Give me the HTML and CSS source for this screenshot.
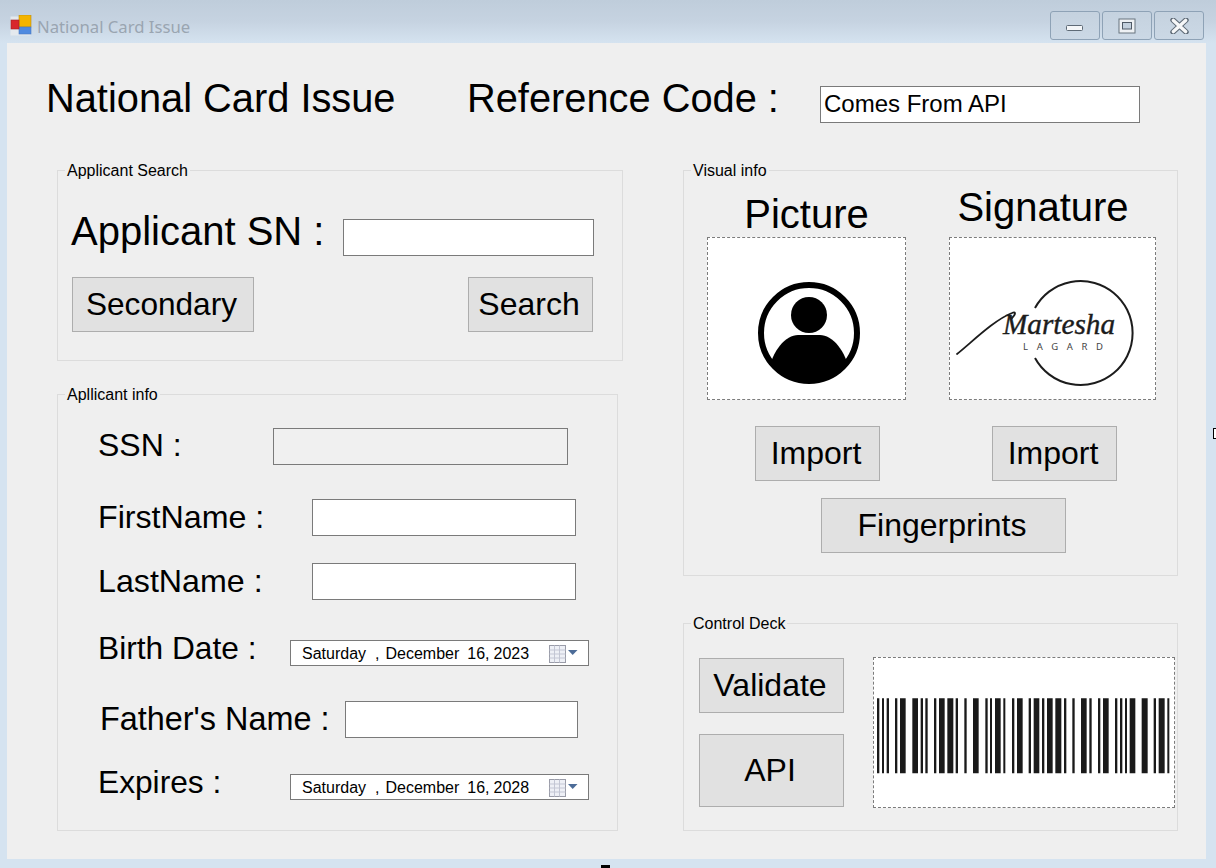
FILE: index.html
```html
<!DOCTYPE html>
<html lang="en">
<head>
<meta charset="utf-8">
<title>National Card Issue</title>
<link rel="stylesheet" href="styles.css">
</head>
<body>
<div class="window">
  <div class="titlebar">
    <svg class="app-icon" width="22" height="21" viewBox="0 0 22 21">
      <rect x="0.5" y="1.5" width="20" height="19" fill="#e4e9ee"/>
      <rect x="9" y="0" width="12" height="12" fill="#f4b400" stroke="#b98a10" stroke-width="0.6"/>
      <rect x="9" y="12" width="12" height="7" fill="#4f8ae0" stroke="#4a78c0" stroke-width="0.6"/>
      <rect x="1" y="5" width="8" height="9" fill="#d8282c" stroke="#a02024" stroke-width="0.6"/>
    </svg>
    <span class="window-title">National Card Issue</span>
    <div class="window-controls">
      <div class="win-btn">
        <svg width="19" height="8" viewBox="0 0 19 8"><rect x="1.5" y="1.5" width="16" height="5" rx="1" fill="#f4f6f8" stroke="#5e6a76"/></svg>
      </div>
      <div class="win-btn">
        <svg width="18" height="16" viewBox="0 0 18 16"><rect x="1" y="1" width="16" height="14" fill="#eef1f4" stroke="#69747f"/><rect x="4.5" y="4.5" width="9" height="6.5" fill="#c3d0dd" stroke="#4f5a66"/></svg>
      </div>
      <div class="win-btn">
        <svg width="19" height="16" viewBox="0 0 19 16"><path d="M3 2 L16 14 M16 2 L3 14" fill="none" stroke="#5e6a76" stroke-width="5.4" stroke-linecap="round"/><path d="M3.4 2.4 L15.6 13.6 M15.6 2.4 L3.4 13.6" fill="none" stroke="#f6f7f8" stroke-width="3.4" stroke-linecap="round"/></svg>
      </div>
    </div>
  </div>

  <div class="client">
    <header class="form-header">
      <h1 class="heading-xl form-title">National Card Issue</h1>
      <h2 class="heading-xl ref-label">Reference Code :</h2>
      <input class="textbox ref-input" type="text" value="Comes From API" aria-label="Reference Code">
    </header>

    <main class="columns">
      <div class="col">
        <fieldset class="group group-search">
          <legend>Applicant Search</legend>
          <div class="group-body body-search">
            <div class="sn-row">
              <label class="heading-xl sn-label">Applicant SN :</label>
              <input class="textbox sn-input" type="text" aria-label="Applicant SN">
            </div>
            <div class="search-actions">
              <button class="btn btn-secondary" type="button">Secondary</button>
              <button class="btn btn-search" type="button">Search</button>
            </div>
          </div>
        </fieldset>

        <fieldset class="group group-info">
          <legend>Apllicant info</legend>
          <div class="group-body body-info">
            <div class="row">
              <label class="field-label label-ssn">SSN :</label>
              <input class="textbox input-ssn" type="text" disabled aria-label="SSN">
            </div>
            <div class="row row-first">
              <label class="field-label label-name">FirstName :</label>
              <input class="textbox input-name" type="text" aria-label="FirstName">
            </div>
            <div class="row row-last">
              <label class="field-label label-name">LastName :</label>
              <input class="textbox input-name" type="text" aria-label="LastName">
            </div>
            <div class="row row-birth">
              <label class="field-label label-date">Birth Date :</label>
              <div class="datepicker">
                <span class="dp-dow">Saturday</span><span>,</span><span>December</span><span class="dp-day">16,</span><span class="dp-year">2023</span>
                <svg class="dp-cal" width="29" height="18" viewBox="0 0 29 18"><rect x="0.5" y="0.5" width="16" height="17" fill="#eef0f6" stroke="#9a9ca8"/><path d="M0.5 5H16.5M0.5 9H16.5M0.5 13H16.5M5.5 .5V17.5M10.5 .5V17.5" stroke="#c3c6d4" fill="none"/><path d="M19 5H28.5L23.7 10Z" fill="#4c6c98"/></svg>
              </div>
            </div>
            <div class="row row-father">
              <label class="field-label label-father">Father's Name :</label>
              <input class="textbox input-father" type="text" aria-label="Father's Name">
            </div>
            <div class="row row-expires">
              <label class="field-label label-date">Expires :</label>
              <div class="datepicker">
                <span class="dp-dow">Saturday</span><span>,</span><span>December</span><span class="dp-day">16,</span><span class="dp-year">2028</span>
                <svg class="dp-cal" width="29" height="18" viewBox="0 0 29 18"><rect x="0.5" y="0.5" width="16" height="17" fill="#eef0f6" stroke="#9a9ca8"/><path d="M0.5 5H16.5M0.5 9H16.5M0.5 13H16.5M5.5 .5V17.5M10.5 .5V17.5" stroke="#c3c6d4" fill="none"/><path d="M19 5H28.5L23.7 10Z" fill="#4c6c98"/></svg>
              </div>
            </div>
          </div>
        </fieldset>
      </div>

      <div class="col">
        <fieldset class="group group-visual">
          <legend>Visual info</legend>
          <div class="group-body body-visual">
            <div class="visual-grid">
              <div class="visual-col visual-picture">
                <h3 class="heading-lg">Picture</h3>
                <div class="picture-box picture-photo">
                  <svg width="197" height="161" viewBox="0 0 197 161">
                    <defs><clipPath id="ring"><circle cx="101" cy="95" r="48"/></clipPath></defs>
                    <circle cx="101" cy="95" r="48" fill="#fff" stroke="#000" stroke-width="6"/>
                    <circle cx="101" cy="77" r="18"/>
                    <path clip-path="url(#ring)" d="M60 136C64 112 78 97 90 97H112C124 97 138 112 142 136V150H60Z"/>
                  </svg>
                </div>
                <button class="btn btn-import btn-import-photo" type="button">Import</button>
              </div>
              <div class="visual-col visual-signature">
                <h3 class="heading-lg">Signature</h3>
                <div class="picture-box picture-sign">
                  <svg width="205" height="161" viewBox="0 0 205 161">
                    <path d="M85 70A52 52 0 1 1 85 120" fill="none" stroke="#1c1c1c" stroke-width="2"/>
                    <path d="M7 116C22 104 44 82 62 75C66 73 66 76 62 80" fill="none" stroke="#1c1c1c" stroke-width="1.8" stroke-linecap="round"/>
                    <text class="sign-name" x="53" y="96" textLength="112" lengthAdjust="spacingAndGlyphs">Martesha</text>
                    <text class="sign-sub" x="73" y="112" textLength="80">LAGARD</text>
                  </svg>
                </div>
                <button class="btn btn-import btn-import-sign" type="button">Import</button>
              </div>
            </div>
            <button class="btn btn-fingerprints" type="button">Fingerprints</button>
          </div>
        </fieldset>

        <fieldset class="group group-control">
          <legend>Control Deck</legend>
          <div class="group-body body-control">
            <div class="deck">
              <div class="deck-buttons">
                <button class="btn btn-validate" type="button">Validate</button>
                <button class="btn btn-api" type="button">API</button>
              </div>
              <div class="picture-box barcode-box">
                <svg width="300" height="149" viewBox="27 24 900 447">
                  <path fill="#1a1a1a" d="M36 145h7v225h-7zM51 145h6v225h-6zM65 145h7v225h-7zM90 145h7v225h-7zM105 145h17v225h-17zM142 145h17v225h-17zM167 145h7v225h-7zM181 145h7v225h-7zM207 145h7v225h-7zM222 145h17v225h-17zM247 145h18v225h-18zM272 145h7v225h-7zM298 145h7v225h-7zM324 145h17v225h-17zM361 145h7v225h-7zM375 145h6v225h-6zM390 145h17v225h-17zM415 145h6v225h-6zM441 145h7v225h-7zM456 145h17v225h-17zM491 145h7v225h-7zM506 145h17v225h-17zM531 145h7v225h-7zM546 145h17v225h-17zM571 145h18v225h-18zM597 145h7v225h-7zM622 145h7v225h-7zM648 145h17v225h-17zM673 145h7v225h-7zM699 145h7v225h-7zM714 145h17v225h-17zM750 145h7v225h-7zM765 145h7v225h-7zM780 145h6v225h-6zM794 145h17v225h-17zM830 145h18v225h-18zM866 145h7v225h-7zM881 145h18v225h-18zM907 145h6v225h-6z"/>
                </svg>
              </div>
            </div>
          </div>
        </fieldset>
      </div>
    </main>
  </div>

  <span class="cursor-mark cursor-right"></span>
  <span class="cursor-mark cursor-bottom"></span>
</div>
</body>
</html>
```

FILE: styles.css
```css
* { box-sizing: border-box; }

html, body {
  margin: 0;
  padding: 0;
  height: 100%;
  overflow: hidden;
}

body {
  font-family: "Liberation Sans", Arial, sans-serif;
  color: #000;
  background: #d5e3f0;
}

.window {
  position: relative;
  width: 1216px;
  height: 868px;
  display: flex;
  flex-direction: column;
  background: #d5e3f0;
}

.titlebar {
  flex: none;
  height: 43px;
  display: flex;
  align-items: flex-start;
  background: linear-gradient(#bfcddb 0%, #c6d3e1 50%, #d5e3f0 100%);
}

.app-icon { margin: 15px 0 0 10px; }

.window-title {
  margin: 15px 0 0 5px;
  font-family: "Noto Sans", sans-serif;
  font-size: 16.7px;
  line-height: 24px;
  color: #9aa5b1;
}

.window-controls {
  margin: 11px 12px 0 auto;
  display: flex;
  gap: 2px;
}

.win-btn {
  width: 50px;
  height: 29px;
  display: flex;
  align-items: center;
  justify-content: center;
  border: 1px solid #8ea2b6;
  border-radius: 3px;
  background: linear-gradient(#c5d2df, #cbd8e5);
}

.win-btn:first-child svg { margin-top: 4px; margin-right: 2px; }

.client {
  flex: none;
  height: 816px;
  margin: 0 10px 0 7px;
  padding: 32px 0 0 39px;
  background: #efefef;
}

.form-header {
  display: flex;
  align-items: flex-start;
}

.heading-xl {
  margin: 0;
  font-size: 40px;
  font-weight: 400;
  line-height: 46px;
}

.form-title { width: 421px; flex: none; font-size: 39.8px; }
.ref-label { width: 353px; flex: none; font-size: 39.8px; }

.textbox {
  display: block;
  height: 37px;
  padding: 0 3px;
  font-family: inherit;
  color: #000;
  background: #fff;
  border: 1px solid #7a7a7a;
  border-radius: 0;
  outline: 0;
}

.ref-input {
  width: 320px;
  margin-top: 11px;
  padding: 0 3px 2px;
  font-size: 24px;
}

.columns {
  display: flex;
  gap: 60px;
  margin: 39px 0 0 11px;
}

.col {
  display: flex;
  flex-direction: column;
}

.col:first-child { width: 566px; gap: 25px; }
.col:last-child { width: 495px; gap: 39px; }

.group {
  margin: 0;
  padding: 0;
  min-width: 0;
  border: 1px solid #dcdcdc;
}

.group legend {
  margin: 0 0 0 7px;
  padding: 0 2px;
  font-size: 16px;
  line-height: 17px;
}

.group-search { width: 566px; height: 199px; }
.group-info { width: 561px; height: 445px; }
.group-visual { width: 495px; height: 414px; }
.group-control { width: 495px; height: 216px; }

.body-search { padding: 29px 0 0 13px; }
.body-info { padding: 25px 0 0 40px; }
.body-visual { padding: 12px 0 0 23px; }
.body-control { padding: 25px 0 0 15px; }

.sn-row { display: flex; align-items: flex-start; }
.sn-label { width: 272px; flex: none; }
.sn-input { width: 251px; margin-top: 11px; }

.btn {
  display: block;
  padding: 0 3px 0 0;
  font-family: inherit;
  font-size: 32px;
  color: #000;
  background: #e1e1e1;
  border: 1px solid #adadad;
  border-radius: 0;
}

.search-actions {
  display: flex;
  justify-content: space-between;
  width: 522px;
  margin-top: 21px;
  padding-left: 1px;
}

.btn-secondary { width: 182px; height: 55px; font-size: 31.6px; }
.btn-search { width: 125px; height: 55px; }

.row {
  display: flex;
  align-items: flex-start;
  height: 37px;
}

.field-label {
  flex: none;
  font-size: 32.2px;
  line-height: 37px;
}

.label-ssn { width: 175px; margin-top: -1px; font-size: 32px; }
.label-name { width: 214px; }
.label-date { width: 192px; font-size: 31.7px; }
.label-father { width: 245px; margin-left: 2px; font-size: 32.4px; }

.input-ssn { width: 295px; background: #f0f0f0; }
.input-name { width: 264px; }
.input-father { width: 233px; }

.row-first { margin-top: 34px; }
.row-last { margin-top: 27px; }
.row-birth { margin-top: 30px; }
.row-father { margin-top: 34px; }
.row-expires { margin-top: 26px; }

.datepicker {
  flex: none;
  width: 299px;
  height: 26px;
  margin-top: 10px;
  padding: 1px 10px 0 11px;
  display: flex;
  align-items: center;
  gap: 6px;
  font-size: 16px;
  background: #fff;
  border: 1px solid #7a7a7a;
}

.dp-dow { margin-right: 3px; }
.dp-day { margin-left: 2px; }
.dp-year { margin-left: -2px; }
.dp-cal { margin-left: auto; }

.heading-lg {
  margin: 0;
  font-size: 40px;
  font-weight: 400;
  line-height: 46px;
  text-align: center;
}

.visual-grid {
  display: flex;
  gap: 43px;
}

.visual-col { display: flex; flex-direction: column; }
.visual-picture { width: 199px; }
.visual-signature { width: 207px; }
.visual-signature .heading-lg { margin: -7px 0 7px; padding-right: 19px; white-space: nowrap; }

.picture-box {
  background: #fff;
  border: 1px dashed #7c7c7c;
}

.picture-box svg { display: block; }
.picture-photo, .picture-sign { height: 163px; }

.btn-import {
  width: 125px;
  height: 55px;
  margin-top: 26px;
  align-self: center;
}

.btn-import-photo { margin-left: 22px; }
.btn-import-sign { margin-left: 4px; }

.btn-fingerprints {
  width: 245px;
  height: 55px;
  margin: 17px 0 0 114px;
}

.sign-name {
  font-family: "Liberation Serif", serif;
  font-style: italic;
  font-size: 29px;
  fill: #1c1c1c;
  stroke: #1c1c1c;
  stroke-width: 0.4;
}

.sign-sub {
  font-family: "Noto Sans", sans-serif;
  font-size: 9.5px;
  fill: #444;
}

.deck { display: flex; gap: 29px; align-items: flex-start; }

.deck-buttons {
  width: 145px;
  margin-top: 1px;
  display: flex;
  flex-direction: column;
  gap: 21px;
}

.btn-validate { width: 145px; height: 55px; }
.btn-api { width: 145px; height: 73px; }

.barcode-box { width: 302px; height: 151px; }

.cursor-mark {
  position: absolute;
  background: #fff;
  border: 1px solid #000;
}

.cursor-right { left: 1213px; top: 428px; width: 5px; height: 11px; }
.cursor-bottom { left: 601px; top: 865px; width: 9px; height: 5px; background: #000; }
```
